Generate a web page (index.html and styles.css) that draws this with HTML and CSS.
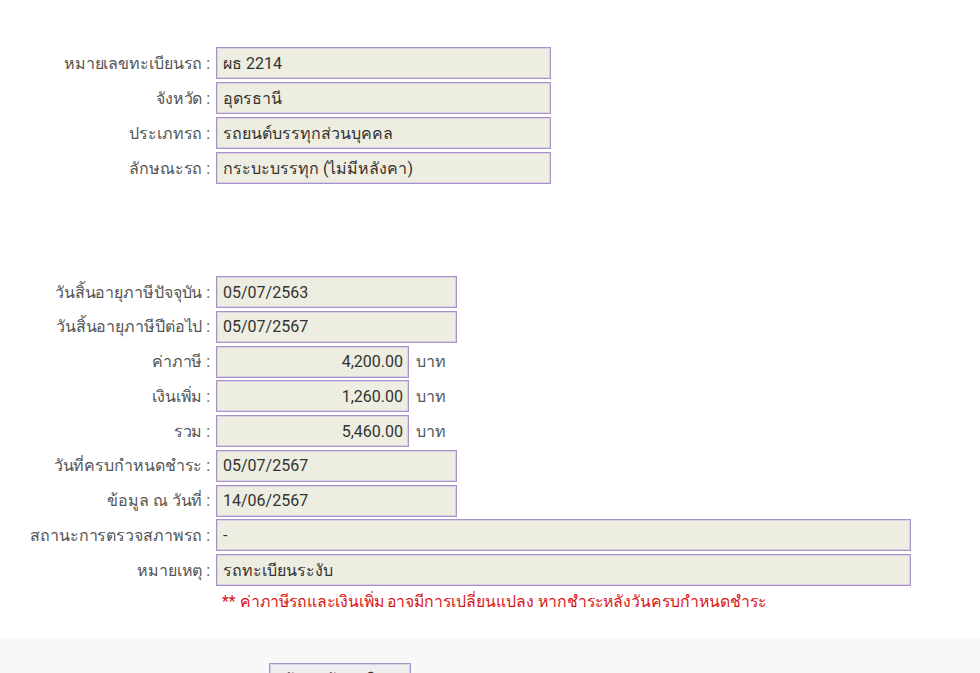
FILE: index.html
```html
<!DOCTYPE html>
<html lang="th">
<head>
<meta charset="utf-8">
<title>ข้อมูลรถ</title>
<link rel="stylesheet" href="styles.css">
</head>
<body>
<div class="page">
  <section class="group group-top">
    <div class="row"><span class="label">หมายเลขทะเบียนรถ :</span><span class="box box-long">ผธ 2214</span></div>
    <div class="row"><span class="label">จังหวัด :</span><span class="box box-long">อุดรธานี</span></div>
    <div class="row"><span class="label">ประเภทรถ :</span><span class="box box-long">รถยนต์บรรทุกส่วนบุคคล</span></div>
    <div class="row"><span class="label">ลักษณะรถ :</span><span class="box box-long">กระบะบรรทุก (ไม่มีหลังคา)</span></div>
  </section>
  <section class="group group-tax">
    <div class="row"><span class="label">วันสิ้นอายุภาษีปัจจุบัน :</span><span class="box box-date">05/07/2563</span></div>
    <div class="row"><span class="label">วันสิ้นอายุภาษีปีต่อไป :</span><span class="box box-date">05/07/2567</span></div>
    <div class="row"><span class="label">ค่าภาษี :</span><span class="box box-num">4,200.00</span><span class="unit">บาท</span></div>
    <div class="row"><span class="label">เงินเพิ่ม :</span><span class="box box-num">1,260.00</span><span class="unit">บาท</span></div>
    <div class="row"><span class="label">รวม :</span><span class="box box-num">5,460.00</span><span class="unit">บาท</span></div>
    <div class="row"><span class="label">วันที่ครบกำหนดชำระ :</span><span class="box box-date">05/07/2567</span></div>
    <div class="row"><span class="label">ข้อมูล ณ วันที่ :</span><span class="box box-date">14/06/2567</span></div>
    <div class="row"><span class="label">สถานะการตรวจสภาพรถ :</span><span class="box box-wide">-</span></div>
    <div class="row"><span class="label">หมายเหตุ :</span><span class="box box-wide">รถทะเบียนระงับ</span></div>
    <p class="note">** ค่าภาษีรถและเงินเพิ่ม อาจมีการเปลี่ยนแปลง หากชำระหลังวันครบกำหนดชำระ</p>
  </section>
</div>
<footer class="footer">
  <button class="btn" type="button">ค้นหาข้อมูลใหม่</button>
</footer>
</body>
</html>
```
FILE: styles.css
```css
html, body {
  margin: 0;
  padding: 0;
  background: #ffffff;
}
body {
  font-family: Roboto, "Noto Sans", "DejaVu Sans", sans-serif;
  font-size: 16px;
  color: #333333;
}
.page {
  padding-top: 47px;
}
.group {
  display: flex;
  flex-direction: column;
}
.group-top {
  gap: 3px;
}
.group-tax {
  margin-top: 92px;
  gap: 2.75px;
}
.row {
  display: flex;
  align-items: center;
  height: 32px;
}
.label {
  width: 210px;
  flex: none;
  text-align: right;
  color: #555555;
  font-size: 16px;
  margin-right: 6px;
  white-space: nowrap;
  letter-spacing: -0.1px;
}
.box {
  box-sizing: border-box;
  height: 32px;
  display: flex;
  align-items: center;
  padding: 0 6px;
  background: #eeede1;
  border: 1px solid #a993c6;
  box-shadow: inset 0 0 0 1px #d9cfe6;
  color: #333333;
  white-space: nowrap;
}
.box-long { width: 335px; }
.box-date { width: 241px; }
.box-num {
  width: 193px;
  justify-content: flex-end;
  padding-right: 5px;
}
.box-wide { width: 695px; }
.unit {
  margin-left: 7px;
  color: #555555;
}
.note {
  margin: 2px 0 0 222px;
  color: #d91616;
  font-size: 15.8px;
  line-height: 22px;
  white-space: nowrap;
}
.footer {
  margin-top: 25px;
  background: #f8f8f8;
  height: 80px;
  padding-top: 25px;
  box-sizing: border-box;
}
.btn {
  margin-left: 269px;
  width: 142px;
  height: 36px;
  background: #eeeeee;
  border: 1px solid #a993c6;
  box-shadow: inset 0 0 0 1px #d9cfe6;
  font-family: Roboto, "Noto Sans", sans-serif;
  font-size: 16px;
  color: #333333;
}
```
